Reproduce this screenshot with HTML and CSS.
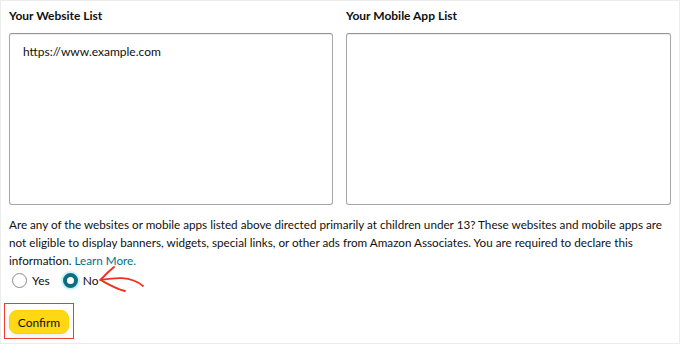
FILE: index.html
```html
<!DOCTYPE html>
<html lang="en">
<head>
    <meta charset="UTF-8">
    <meta name="viewport" content="width=device-width, initial-scale=1.0">
    <title>Associates Store</title>
    <link rel="stylesheet" href="styles.css">
</head>
<body>
<div class="page">

    <div class="lists">
        <div class="list-col">
            <h2 class="list-title">Your Website List</h2>
            <div class="list-box">https://www.example.com</div>
        </div>
        <div class="list-col">
            <h2 class="list-title">Your Mobile App List</h2>
            <div class="list-box"></div>
        </div>
    </div>

    <p class="question">
        Are any of the websites or mobile apps listed above directed primarily at children under 13? These websites and mobile apps are<br>
        not eligible to display banners, widgets, special links, or other ads from Amazon Associates. You are required to declare this<br>
        information. <a href="#" class="learn-link">Learn More.</a>
    </p>

    <div class="radios">
        <label class="radio-item"><span class="radio"></span>Yes</label>
        <label class="radio-item"><span class="radio checked"></span>No</label>
        <!-- annotation arrow -->
        <svg class="arrow" width="50" height="34" viewBox="0 0 50 34">
            <path d="M16 6 C 11 10, 6 15, 2.5 19" fill="none" stroke="#f0311e" stroke-width="2" stroke-linecap="round"/>
            <path d="M2.5 19 C 15 17, 32 14, 45 25" fill="none" stroke="#f0311e" stroke-width="1.8" stroke-linecap="round"/>
            <path d="M2.5 19 C 10 23, 18 28, 27 30" fill="none" stroke="#f0311e" stroke-width="1.8" stroke-linecap="round"/>
        </svg>
    </div>

    <div class="confirm-wrap">
        <button class="confirm-button">Confirm</button>
    </div>

</div>
</body>
</html>
```

FILE: styles.css
```css
body {
    margin: 0;
    font-family: Lato, Arial, sans-serif;
    color: #0f1111;
    background: #fff;
}

.page {
    width: 680px;
    height: 344px;
    box-sizing: border-box;
    border: 1px solid #ececec;
    padding: 6px 9px 0 8px;
}

.lists {
    display: grid;
    grid-template-columns: 324px 325px;
    gap: 13px;
}

.list-title {
    margin: 0 0 8px 0;
    font-size: 12px;
    font-weight: 700;
    line-height: 18px;
}

.list-box {
    height: 172px;
    border: 1px solid #a6a6a6;
    border-top-color: #949494;
    border-radius: 3px;
    box-shadow: 0 1px 0 rgba(255,255,255,.5), 0 1px 0 rgba(15,17,17,.07) inset;
    padding: 9px 13px;
    box-sizing: border-box;
    font-size: 12px;
    line-height: 17px;
}

.question {
    margin: 10px 0 0 0;
    font-size: 11.7px;
    line-height: 18px;
    white-space: nowrap;
}

.learn-link {
    color: #007185;
    text-decoration: none;
}

.radios {
    position: relative;
    display: flex;
    align-items: center;
    gap: 10px;
    height: 22px;
    font-size: 12px;
}

.radio-item {
    display: flex;
    align-items: center;
    gap: 5px;
}

.radio {
    width: 13px;
    height: 13px;
    border: 1px solid #888c8c;
    border-radius: 50%;
    margin-left: 3px;
    background: #fff;
}

.radio.checked {
    border: 4px solid #0e6e81;
    width: 7px;
    height: 7px;
    box-shadow: 0 0 0 2px #c8f3fa;
}

.arrow {
    position: absolute;
    left: 89px;
    top: -8px;
}

.confirm-wrap {
    display: inline-block;
    margin: 12px 0 0 -5px;
    padding: 6px 4px 4px 4px;
    border: 1.5px solid #f03a2a;
}

.confirm-button {
    display: block;
    width: 60px;
    height: 24px;
    padding: 0;
    font-family: inherit;
    font-size: 12px;
    color: #0f1111;
    background: #ffd814;
    border: 1px solid #fcd200;
    border-radius: 8px;
    box-shadow: 0 2px 5px 0 rgba(213,217,217,.5);
}
```
